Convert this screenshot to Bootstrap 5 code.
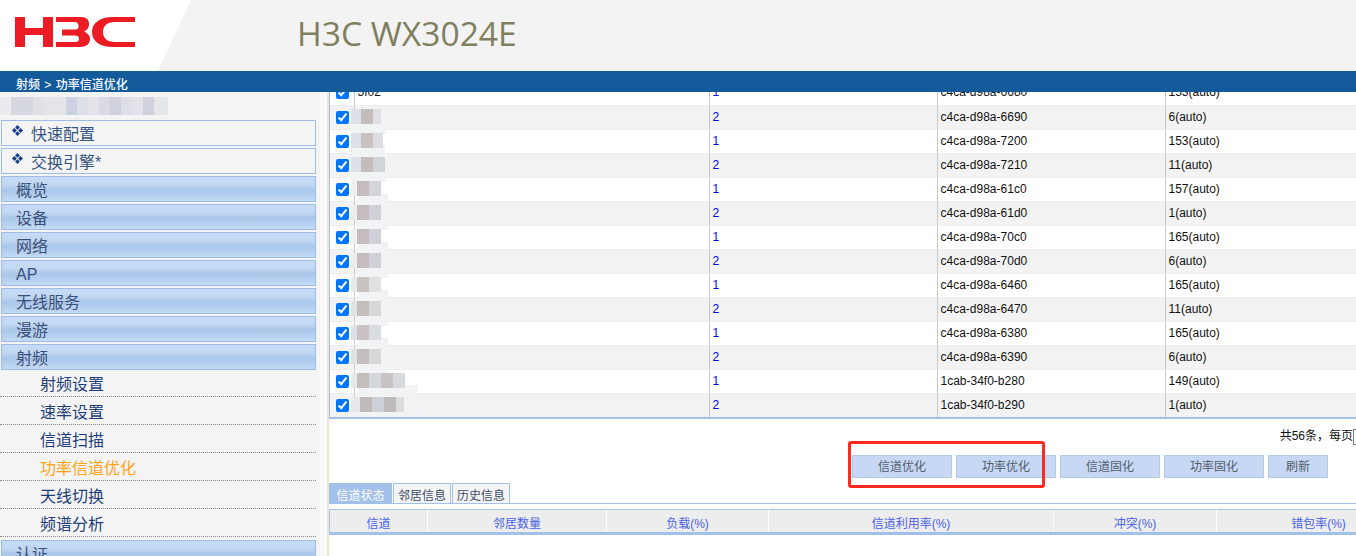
<!DOCTYPE html>
<html lang="zh-CN">
<head>
<meta charset="utf-8">
<title>H3C WX3024E</title>
<link href="https://cdn.jsdelivr.net/npm/bootstrap@5.3.0/dist/css/bootstrap.min.css" rel="stylesheet">
<style>
html,body{height:556px;overflow:hidden;background:#fff}
body{font-family:"Liberation Sans","Noto Sans CJK SC",sans-serif;font-size:12px;color:#000}
.shell{width:1356px;height:556px;overflow:hidden}
.top-head{height:71px;background:#f3f3f3;position:relative}
.top-white{position:absolute;left:0;top:0;width:191px;height:71px;background:#fff;clip-path:polygon(0 0,100% 0,158px 100%,0 100%)}
.logo-mark{position:absolute;left:15px;top:17px;width:120px;height:30px}
.prod-name{position:absolute;left:297px;top:10px;font:33.6px/46px "Open Sans","Noto Sans CJK SC",sans-serif;color:#808060;margin:0}
.crumb{height:21px;background:#135a9b;color:#fff;padding:7px 0 0 16px;line-height:15px;font-size:12px;font-weight:500;overflow:hidden;word-spacing:1px}
.work{height:464px}
.side{width:320px;background:#f4f4f4;flex:none;overflow:hidden}
.blur-strip{height:18px;margin:5px 0 5px;width:168px}
.blur-strip i,.mos i{display:block;flex:none}
.menu-it{margin:0 4px 2px 1px;height:26px;border:1px solid #9dbde6;color:#3b5078;font-size:16px;line-height:28px;padding-left:14px;background:linear-gradient(#c6dbf5,#c2d8f3 30%,#a9c7ea 55%,#c3d9f4)}
.menu-plain{background:#f4f4f4;padding-left:10px;color:#35557f}
.menu-plain svg{width:11px;height:11px;margin:4px 8px 0 0;flex:none}
.menu-plain span{line-height:28px}
.subs{margin:-3px 4px 3px 0}
.sub-it{height:28px;border-bottom:1px dotted #8a8a8a;padding-left:40px;font-size:16px;line-height:31px;color:#1f3f7a}
.sub-on{color:#ffa31a}
.gutter{width:7px;background:#fafafa;flex:none}
.pane{width:1029px;flex:none;border-left:2px solid #ede6d5;position:relative;overflow:hidden;background:#fff}
.grid-wrap{height:327px;overflow:hidden;border-bottom:2px solid #a3c0e9;border-left:1px solid #a3c0e9;width:1027px}
.data-grid{margin-top:-11px;width:1030px;table-layout:fixed;border-collapse:collapse}
.data-grid td{height:24px;padding:0 3px;font-size:12px;line-height:23px;border-bottom:1px solid #ececec;border-left:1px solid #c8c8c8;background:#fff;position:relative;white-space:nowrap;color:#111}
.data-grid td:first-child{border-left:0;padding:0 0 0 6px}
.data-grid tr:nth-child(even) td{background:#f3f3f3}
.data-grid input{display:block;width:13px;height:13px;margin:0;position:relative;z-index:2}
.slot{color:#0000ee!important}
.mos{position:absolute;left:-4px;top:3px;z-index:1}
.mos i{height:15px}
.mos-pale{position:absolute;left:-4px;top:15px;height:13px;background:#f1f3f5;z-index:1}
.pager{text-align:right;padding-top:10px;line-height:15px;white-space:nowrap;color:#111;height:30px;display:flex;justify-content:flex-end}
.pager em{font-style:normal}
.pager b{display:block;width:3px;height:16px;border:1px solid #777;border-right:0;flex:none;font-weight:400}
.act-row{height:23px;margin:6px 0 0 523px;gap:4px}
.act-btn{height:23px;width:100px;padding:0;border:1px solid #b3cbea;background:#c6d8f3;border-radius:0;color:#555e6e;font-size:12px;line-height:23px}
.act-btn:hover{background:#c6d8f3;color:#555e6e;border-color:#b3cbea}
.act-short{width:60px}
.red-mark{position:absolute;left:519px;top:349px;width:197px;height:47px;border:3px solid #ff2a1f;border-radius:3px;pointer-events:none}
.tab-row{margin-top:5px;height:21px;border-bottom:1px solid #a3c0e9;gap:1px}
.tab-it{width:58px;height:20px;border:1px solid #a3c0e9;border-bottom:0;background:#f4f4f4;color:#3e4e68;text-align:center;line-height:25px;font-size:12px}
.tab-on{width:63px;background:#a3c0e9;color:#fff;border:0;line-height:27px}
.head-grid{margin-top:5px;border-top:1px solid #a3c0e9;border-bottom:3px solid #a3c0e9;border-left:1px solid #a3c0e9;height:26px;background:#ededed;width:1130px}
.head-grid div{height:22px;border-right:1px solid #fff;text-align:center;line-height:28px;color:#4a63e6;font-size:12px;flex:none}
</style>
</head>
<body>
<div class="shell d-flex flex-column">
  <header class="top-head">
    <div class="top-white"></div>
    <svg class="logo-mark" viewBox="0 0 120 30" aria-label="H3C" role="img">
      <path fill="#ed1c24" d="M0 0H10V11H28V0H38V30H28V18H10V30H0Z"/>
      <path fill="#ed1c24" d="M41 0H66C72 0 74 3 74 7C74 11 72 13 69 14.5C72 16 75 18 75 22C75 27 71 30 65 30H41V25H60C63 25 64 24 64 22C64 20 63 18.5 60 18.5H47V12.5H60C63 12.5 63.5 11 63.5 9C63.5 6.5 62 5 60 5H41Z"/>
      <path fill="#ed1c24" d="M120 0H98C85 0 77 6 77 15C77 24 85 30 98 30H120V25H100C92 25 88 21 88 15C88 9 92 5 100 5H120Z"/>
    </svg>
    <h1 class="prod-name">H3C WX3024E</h1>
  </header>
  <div class="crumb">射频 &gt; 功率信道优化</div>
  <div class="work d-flex">
    <aside class="side">
      <div class="blur-strip d-flex">
        <i style="width:11px;background:#eaebee"></i><i style="width:22px;background:#d6d8df"></i><i style="width:11px;background:#dfe1e6"></i><i style="width:22px;background:#e3e5e9"></i><i style="width:11px;background:#cdd2e0"></i><i style="width:11px;background:#dcdfe6"></i><i style="width:11px;background:#e2e4e9"></i><i style="width:11px;background:#d8dbe3"></i><i style="width:11px;background:#cfd2dd"></i><i style="width:11px;background:#dcdfe5"></i><i style="width:11px;background:#e1e3e8"></i><i style="width:11px;background:#cfd2dc"></i><i style="width:14px;background:#e6e7eb"></i>
      </div>
      <div class="menu-it menu-plain d-flex">
        <svg viewBox="0 0 10 10"><path fill="#1a3f8a" d="M5 0L7.2 2.2L5 4.4L2.8 2.2ZM2.2 2.8L4.4 5L2.2 7.2L0 5ZM7.8 2.8L10 5L7.8 7.2L5.6 5ZM5 5.6L7.2 7.8L5 10L2.8 7.8Z"/></svg><span>快速配置</span>
      </div>
      <div class="menu-it menu-plain d-flex">
        <svg viewBox="0 0 10 10"><path fill="#1a3f8a" d="M5 0L7.2 2.2L5 4.4L2.8 2.2ZM2.2 2.8L4.4 5L2.2 7.2L0 5ZM7.8 2.8L10 5L7.8 7.2L5.6 5ZM5 5.6L7.2 7.8L5 10L2.8 7.8Z"/></svg><span>交换引擎*</span>
      </div>
      <div class="menu-it">概览</div>
      <div class="menu-it">设备</div>
      <div class="menu-it">网络</div>
      <div class="menu-it">AP</div>
      <div class="menu-it">无线服务</div>
      <div class="menu-it">漫游</div>
      <div class="menu-it">射频</div>
      <div class="subs">
        <div class="sub-it">射频设置</div>
        <div class="sub-it">速率设置</div>
        <div class="sub-it">信道扫描</div>
        <div class="sub-it sub-on">功率信道优化</div>
        <div class="sub-it">天线切换</div>
        <div class="sub-it">频谱分析</div>
      </div>
      <div class="menu-it">认证</div>
    </aside>
    <div class="gutter"></div>
    <main class="pane">
      <div class="grid-wrap">
        <table class="data-grid">
          <colgroup><col style="width:24px"><col style="width:355px"><col style="width:228px"><col style="width:228px"><col style="width:195px"></colgroup>
          <tbody>
            <tr><td><input type="checkbox" checked></td><td>5f02</td><td class="slot">1</td><td>c4ca-d98a-6680</td><td>153(auto)</td></tr>
            <tr><td><input type="checkbox" checked></td><td><span class="mos-pale" style="width:36px"></span><span class="mos d-flex"><i style="width:10px;background:#dde0e8"></i><i style="width:12px;background:#c4bdbd"></i><i style="width:8px;background:#dfe0e3"></i></span></td><td class="slot">2</td><td>c4ca-d98a-6690</td><td>6(auto)</td></tr>
            <tr><td><input type="checkbox" checked></td><td><span class="mos-pale" style="width:34px"></span><span class="mos d-flex"><i style="width:10px;background:#dde0e8"></i><i style="width:12px;background:#c8c2c2"></i><i style="width:10px;background:#dcdde1"></i></span></td><td class="slot">1</td><td>c4ca-d98a-7200</td><td>153(auto)</td></tr>
            <tr><td><input type="checkbox" checked></td><td><span class="mos-pale" style="width:36px"></span><span class="mos d-flex"><i style="width:10px;background:#dde0e8"></i><i style="width:12px;background:#c4bdbd"></i><i style="width:12px;background:#d3d4d8"></i></span></td><td class="slot">2</td><td>c4ca-d98a-7210</td><td>11(auto)</td></tr>
            <tr><td><input type="checkbox" checked></td><td><span class="mos-pale" style="width:30px;left:3px"></span><span class="mos d-flex"><i style="width:6px;background:#f0f0f1"></i><i style="width:12px;background:#c4bdbd"></i><i style="width:12px;background:#d3d5d9"></i></span></td><td class="slot">1</td><td>c4ca-d98a-61c0</td><td>157(auto)</td></tr>
            <tr><td><input type="checkbox" checked></td><td><span class="mos-pale" style="width:30px;left:3px"></span><span class="mos d-flex"><i style="width:6px;background:#ededee"></i><i style="width:12px;background:#c4bdbd"></i><i style="width:12px;background:#cfd0d8"></i></span></td><td class="slot">2</td><td>c4ca-d98a-61d0</td><td>1(auto)</td></tr>
            <tr><td><input type="checkbox" checked></td><td><span class="mos-pale" style="width:30px;left:3px"></span><span class="mos d-flex"><i style="width:6px;background:#f0f0f1"></i><i style="width:12px;background:#c4bdbd"></i><i style="width:12px;background:#cfd0d8"></i></span></td><td class="slot">1</td><td>c4ca-d98a-70c0</td><td>165(auto)</td></tr>
            <tr><td><input type="checkbox" checked></td><td><span class="mos-pale" style="width:30px;left:3px"></span><span class="mos d-flex"><i style="width:6px;background:#ededee"></i><i style="width:12px;background:#c4bdbd"></i><i style="width:12px;background:#cfd0d8"></i></span></td><td class="slot">2</td><td>c4ca-d98a-70d0</td><td>6(auto)</td></tr>
            <tr><td><input type="checkbox" checked></td><td><span class="mos-pale" style="width:30px;left:3px"></span><span class="mos d-flex"><i style="width:6px;background:#e6e8ea"></i><i style="width:12px;background:#c9c3c3"></i><i style="width:12px;background:#dfe1e3"></i></span></td><td class="slot">1</td><td>c4ca-d98a-6460</td><td>165(auto)</td></tr>
            <tr><td><input type="checkbox" checked></td><td><span class="mos-pale" style="width:30px;left:3px"></span><span class="mos d-flex"><i style="width:6px;background:#e0e2e4"></i><i style="width:12px;background:#c4bdbd"></i><i style="width:12px;background:#d6d8da"></i></span></td><td class="slot">2</td><td>c4ca-d98a-6470</td><td>11(auto)</td></tr>
            <tr><td><input type="checkbox" checked></td><td><span class="mos-pale" style="width:30px;left:3px"></span><span class="mos d-flex"><i style="width:6px;background:#dde0e6"></i><i style="width:12px;background:#c9c3c5"></i><i style="width:12px;background:#d9dce1"></i></span></td><td class="slot">1</td><td>c4ca-d98a-6380</td><td>165(auto)</td></tr>
            <tr><td><input type="checkbox" checked></td><td><span class="mos-pale" style="width:30px;left:3px"></span><span class="mos d-flex"><i style="width:6px;background:#dfe1e4"></i><i style="width:12px;background:#c4bdbd"></i><i style="width:12px;background:#d6d8da"></i></span></td><td class="slot">2</td><td>c4ca-d98a-6390</td><td>6(auto)</td></tr>
            <tr><td><input type="checkbox" checked></td><td><span class="mos-pale" style="width:60px;left:3px"></span><span class="mos d-flex"><i style="width:6px;background:#e6e8ea"></i><i style="width:12px;background:#c4bdbd"></i><i style="width:12px;background:#d4d7dc"></i><i style="width:12px;background:#c9c3c5"></i><i style="width:12px;background:#d8d9dd"></i></span></td><td class="slot">1</td><td>1cab-34f0-b280</td><td>149(auto)</td></tr>
            <tr><td><input type="checkbox" checked></td><td><span class="mos-pale" style="width:72px;left:-4px"></span><span class="mos d-flex"><i style="width:9px;background:#e6e8ec"></i><i style="width:12px;background:#c0bbbb"></i><i style="width:12px;background:#cdd0d4"></i><i style="width:12px;background:#c0bbbb"></i><i style="width:8px;background:#ddddde"></i></span></td><td class="slot">2</td><td>1cab-34f0-b290</td><td>1(auto)</td></tr>
          </tbody>
        </table>
      </div>
      <div class="pager"><em>共56条，每页</em><b></b></div>
      <div class="act-row d-flex">
        <button type="button" class="btn act-btn">信道优化</button>
        <button type="button" class="btn act-btn">功率优化</button>
        <button type="button" class="btn act-btn">信道固化</button>
        <button type="button" class="btn act-btn">功率固化</button>
        <button type="button" class="btn act-btn act-short">刷新</button>
      </div>
      <div class="red-mark"></div>
      <div class="tab-row d-flex">
        <div class="tab-it tab-on">信道状态</div>
        <div class="tab-it">邻居信息</div>
        <div class="tab-it">历史信息</div>
      </div>
      <div class="head-grid d-flex">
        <div style="width:98px">信道</div>
        <div style="width:179px">邻居数量</div>
        <div style="width:162px">负载(%)</div>
        <div style="width:285px">信道利用率(%)</div>
        <div style="width:163px">冲突(%)</div>
        <div style="width:204px">错包率(%)</div>
      </div>
    </main>
  </div>
</div>
<script src="https://cdn.jsdelivr.net/npm/bootstrap@5.3.0/dist/js/bootstrap.bundle.min.js"></script>
</body>
</html>
